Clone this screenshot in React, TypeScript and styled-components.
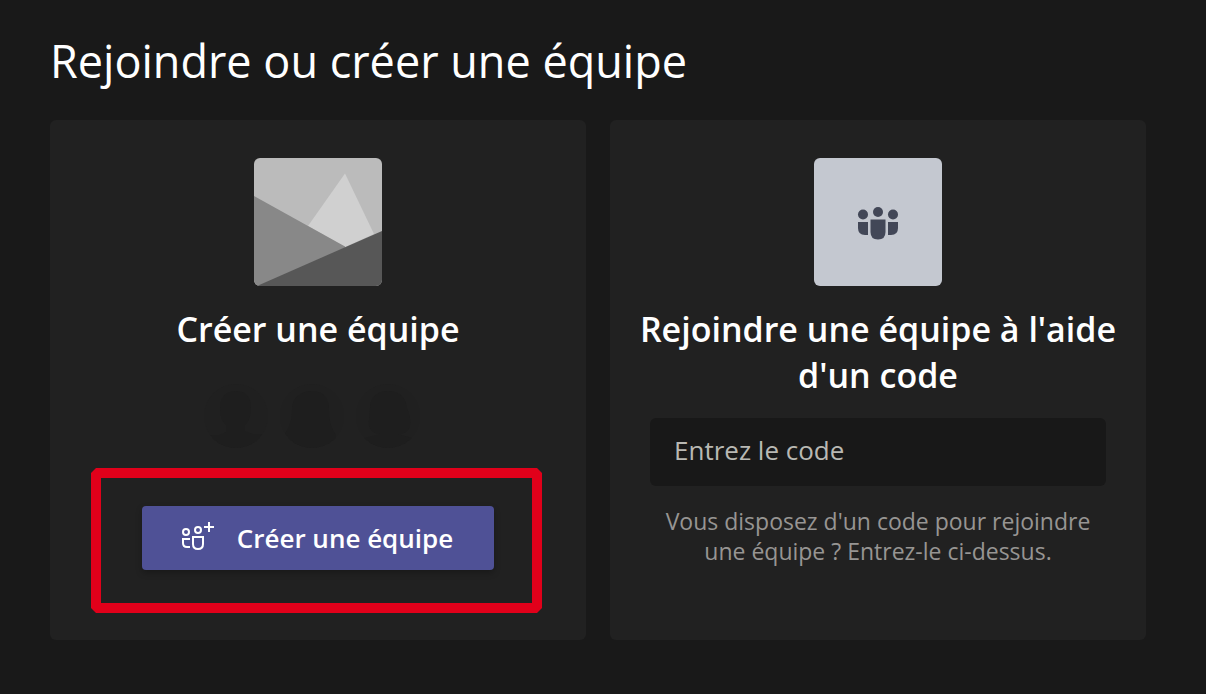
import React from "react";
import styled, { createGlobalStyle } from "styled-components";

const GlobalStyle = createGlobalStyle`
  * { box-sizing: border-box; }
  body {
    margin: 0;
    min-height: 100vh;
    background: #191919;
    color: #fff;
    font-family: "Segoe UI", "Open Sans", "Noto Sans", sans-serif;
  }
`;

const Page = styled.main`
  padding: 29px 60px 54px 50px;
`;

const Title = styled.h1`
  margin: 0 0 27px;
  font-size: 45px;
  line-height: 64px;
  font-weight: 400;
`;

const Cards = styled.div`
  display: grid;
  grid-template-columns: 1fr 1fr;
  gap: 24px;
`;

const Card = styled.section`
  display: flex;
  flex-direction: column;
  align-items: center;
  min-height: 520px;
  padding: 38px 24px;
  border-radius: 6px;
  background: #212121;
`;

const Tile = styled.svg`
  width: 128px;
  height: 128px;
  border-radius: 6px;
`;

const CardTitle = styled.h2`
  margin: 20px 0 0;
  font-size: 34px;
  line-height: 46px;
  font-weight: 600;
  text-align: center;
`;

const Avatars = styled.div`
  display: flex;
  margin: 32px 0 58px;
`;

const Avatar = styled.svg`
  width: 64px;
  height: 64px;
  margin-right: 12px;
  border-radius: 50%;
  background: #202020;
  fill: #1e1e1e;
`;

const ButtonArea = styled.div`
  position: relative;
`;

const Highlight = styled.div`
  position: absolute;
  inset: -38px -48px -43px -51px;
  border: 10px solid #e1001a;
  pointer-events: none;
  clip-path: polygon(
    5px 0, calc(100% - 5px) 0, 100% 5px, 100% calc(100% - 5px),
    calc(100% - 5px) 100%, 5px 100%, 0 calc(100% - 5px), 0 5px
  );
`;

const CreateButton = styled.button`
  display: flex;
  align-items: center;
  justify-content: center;
  gap: 23px;
  width: 352px;
  height: 64px;
  padding: 0 3px 0 0;
  border: 0;
  border-radius: 4px;
  background: #4f5196;
  box-shadow: 0 3px 6px rgba(0, 0, 0, 0.25);
  color: #fff;
  font: inherit;
  font-size: 26px;
  line-height: 36px;
  font-weight: 600;
`;

const ButtonIcon = styled.svg`
  width: 34px;
  height: 32px;
  fill: none;
  stroke: #fff;
  stroke-width: 2;
`;

const CodeInput = styled.input`
  width: calc(100% - 32px);
  height: 68px;
  margin-top: 20px;
  padding: 0 24px 4px;
  border: 0;
  border-radius: 6px;
  background: #181818;
  color: #fff;
  font: inherit;
  font-size: 26px;
  &::placeholder {
    color: #b9b8b3;
    opacity: 1;
  }
`;

const Hint = styled.p`
  max-width: 456px;
  margin: 20px 0 0;
  color: #979593;
  font-size: 23px;
  line-height: 30px;
  text-align: center;
`;

const Landscape = () => (
  <Tile viewBox="0 0 128 128" aria-hidden="true">
    <path fill="#bbb" d="M0 0h128v128H0z" />
    <path fill="#d0d0d0" d="M91 15.500 54 68l37 21 29-13z" />
    <path fill="#888" d="M0 38 91 88.500V128H0z" />
    <path fill="#575757" d="M3 128 128 73v55z" />
  </Tile>
);

const TeamTile = () => (
  <Tile viewBox="0 0 128 128" aria-hidden="true">
    <path fill="#c4c8d0" d="M0 0h128v128H0z" />
    <g fill="#424757">
      <circle cx="49" cy="56.500" r="5" />
      <circle cx="64" cy="54" r="5" />
      <circle cx="79" cy="56.500" r="5" />
      <path d="M44 64h10v13h-3q-7 0-7-7z" />
      <path d="M74 64h10v6q0 7-7 7h-3z" />
      <path d="M56.500 61.500h15V74q0 7.500-7.500 7.500t-7.500-7.500z" />
    </g>
  </Tile>
);

const TeamAddIcon = () => (
  <ButtonIcon viewBox="0 2 34 32" aria-hidden="true">
    <circle cx="6" cy="12" r="3" />
    <circle cx="18" cy="10" r="3" />
    <path d="M10 19H3v4q0 4 4 4h3" />
    <path d="M13 17h10v7q0 5-5 5t-5-5z" />
    <path d="M29 2v10M24 7h10" />
  </ButtonIcon>
);

const silhouettes = [
  "M32 7c9 0 14 5 15 14 0 8-1 16-6 20v6l8 3h9v14H6V51h9l7-3v-7c-5-4-6-11-6-20C17 12 23 7 32 7z",
  "M32 7c11 0 17 7 17 17 0 11 1 18 7 27v13H4V51c6-9 8-15 8-27C12 14 21 7 32 7z",
  "M32 7c12 0 18 7 19 17 4 9 6 22-3 25-2 1-5 1-6 1l14 4v10H8V54l16-4c-8 0-13-7-11-14l1-12C14 14 20 7 32 7z",
];

export default function App() {
  return (
    <>
      <GlobalStyle />
      <Page>
        <Title>Rejoindre ou créer une équipe</Title>
        <Cards>
          <Card>
            <Landscape />
            <CardTitle>Créer une équipe</CardTitle>
            <Avatars aria-hidden="true">
              {silhouettes.map((d) => (
                <Avatar key={d} viewBox="0 0 64 64">
                  <path d={d} />
                </Avatar>
              ))}
            </Avatars>
            <ButtonArea>
              <CreateButton type="button">
                <TeamAddIcon />
                Créer une équipe
              </CreateButton>
              <Highlight />
            </ButtonArea>
          </Card>
          <Card>
            <TeamTile />
            <CardTitle id="join-title">Rejoindre une équipe à l'aide d'un code</CardTitle>
            <CodeInput
              type="text"
              placeholder="Entrez le code"
              aria-labelledby="join-title"
              aria-describedby="join-hint"
            />
            <Hint id="join-hint">
              Vous disposez d'un code pour rejoindre une équipe ? Entrez-le ci-dessus.
            </Hint>
          </Card>
        </Cards>
      </Page>
    </>
  );
}
